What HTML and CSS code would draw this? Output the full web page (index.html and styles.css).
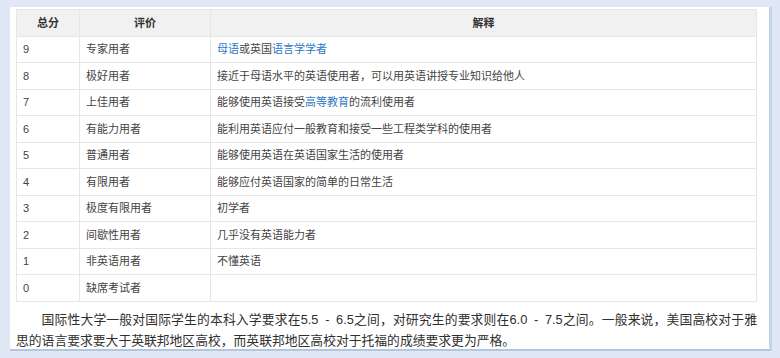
FILE: index.html
```html
<!DOCTYPE html>
<html lang="zh">
<head>
<meta charset="utf-8">
<link rel="stylesheet" href="styles.css">
</head>
<body>
<div class="panel">
  <table class="scores">
    <colgroup>
      <col class="c1"><col class="c2"><col class="c3">
    </colgroup>
    <thead>
      <tr><th>总分</th><th>评价</th><th>解释</th></tr>
    </thead>
    <tbody>
      <tr><td>9</td><td>专家用者</td><td><a>母语</a>或英国<a>语言学学者</a></td></tr>
      <tr><td>8</td><td>极好用者</td><td>接近于母语水平的英语使用者，可以用英语讲授专业知识给他人</td></tr>
      <tr><td>7</td><td>上佳用者</td><td>能够使用英语接受<a>高等教育</a>的流利使用者</td></tr>
      <tr><td>6</td><td>有能力用者</td><td>能利用英语应付一般教育和接受一些工程类学科的使用者</td></tr>
      <tr><td>5</td><td>普通用者</td><td>能够使用英语在英语国家生活的使用者</td></tr>
      <tr><td>4</td><td>有限用者</td><td>能够应付英语国家的简单的日常生活</td></tr>
      <tr><td>3</td><td>极度有限用者</td><td>初学者</td></tr>
      <tr><td>2</td><td>间歇性用者</td><td>几乎没有英语能力者</td></tr>
      <tr><td>1</td><td>非英语用者</td><td>不懂英语</td></tr>
      <tr><td>0</td><td>缺席考试者</td><td></td></tr>
    </tbody>
  </table>
  <p class="note">国际性大学一般对国际学生的本科入学要求在5.5 - 6.5之间，对研究生的要求则在6.0 - 7.5之间。一般来说，美国高校对于雅思的语言要求要大于英联邦地区高校，而英联邦地区高校对于托福的成绩要求更为严格。</p>
</div>
</body>
</html>
```

FILE: styles.css
```css
html, body {
  margin: 0;
  padding: 0;
}
body {
  background: #dfe8f4;
  font-family: "Liberation Sans", "Noto Sans CJK SC", sans-serif;
  color: #333;
  width: 780px;
  height: 358px;
  overflow: hidden;
}
.panel {
  margin: 7px 8px 0 10px;
  height: 344px;
  background: #fff;
  border-right: 3px solid #c3d5ea;
  border-bottom: 2px solid #b3c6dc;
  border-top-left-radius: 2px;
  padding: 2px 8px 0 6px;
  box-sizing: border-box;
}
.scores {
  width: 741px;
  border-collapse: collapse;
  table-layout: fixed;
  font-size: 11px;
  border: 1px solid #e3e3e3;
}
.c1 { width: 63px; }
.c2 { width: 131px; }
.scores th,
.scores td {
  height: 26.5px;
  padding: 0 6px;
  border: 1px solid #e6e6e6;
  box-sizing: border-box;
  line-height: 14px;
}
.scores th {
  background: #f1f1f1;
  font-weight: bold;
  text-align: center;
  color: #333;
}
.scores td {
  text-align: left;
  color: #444;
}
.scores a {
  color: #2b78c5;
  text-decoration: none;
}
.note {
  width: 741px;
  margin: 7px 0 0;
  font-size: 12.8px;
  line-height: 21px;
  text-indent: 2em;
  word-spacing: 3px;
  color: #2f2f2f;
  text-align: justify;
}
```
